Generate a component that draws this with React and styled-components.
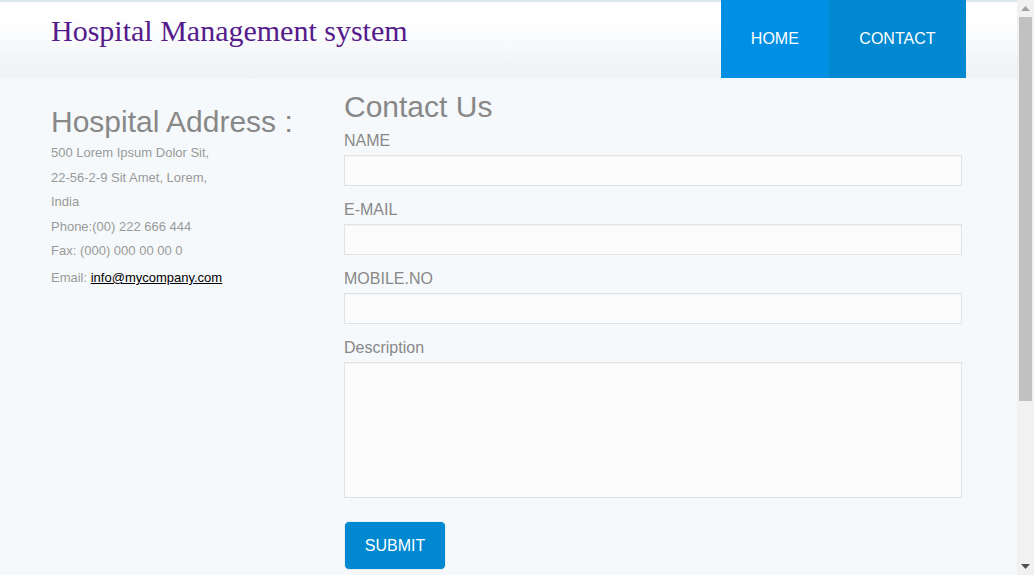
import React from "react";
import styled, { createGlobalStyle } from "styled-components";

const Global = createGlobalStyle`
  html, body { margin: 0; padding: 0; }
  body {
    background: #f6f9fb;
    font-family: "Liberation Sans", Arial, sans-serif;
  }
  * { box-sizing: border-box; }
`;

const Page = styled.div`
  margin-right: 17px;
`;

const Scrollbar = styled.div`
  position: fixed;
  top: 0;
  right: 0;
  width: 17px;
  height: 100vh;
  background: #f1f1f1;
  display: flex;
  flex-direction: column;
`;

const ScrollArrow = styled.div`
  height: 17px;
  display: flex;
  align-items: center;
  justify-content: center;
  flex: none;
`;

const Track = styled.div`
  flex: 1;
  padding: 0 2px;
`;

const Thumb = styled.div`
  height: 71%;
  background: #c1c1c1;
`;

const Header = styled.header`
  display: flex;
  align-items: stretch;
  height: 78px;
  padding: 0 51px;
  background: linear-gradient(to bottom, #dde7ee 0, #dde7ee 2px, #ffffff 2px, #ffffff 20%, #eef2f5 100%);
`;

const Brand = styled.a`
  font-family: "Liberation Serif", "Times New Roman", serif;
  font-size: 30px;
  color: #551a8b;
  text-decoration: none;
  line-height: 1;
  padding-top: 16px;
`;

const Nav = styled.nav`
  display: flex;
  margin-left: auto;
`;

const NavItem = styled.a`
  display: flex;
  align-items: center;
  justify-content: center;
  padding: 0 ${p => p.$pad}px;
  background: ${p => (p.$active ? "#0088d1" : "#008fe3")};
  color: #ffffff;
  font-size: 16px;
  text-decoration: none;
`;

const Main = styled.main`
  display: flex;
  padding: 0 55px 238px 51px;
`;

const AddressCol = styled.section`
  width: 293px;
  flex: none;
  padding-top: 26px;
`;

const Heading = styled.h2`
  margin: 0;
  font-size: 30px;
  font-weight: normal;
  line-height: 36px;
  color: #888888;
`;

const Line = styled.p`
  margin: 0;
  font-size: 13px;
  line-height: 24.5px;
  color: #999999;
  ${p => p.$first && "margin-top: 1px;"}
  ${p => p.$gap && "margin-top: 2.5px;"}
`;

const Mail = styled.a`
  color: #000000;
  text-decoration: underline;
`;

const FormCol = styled.form`
  flex: 1;
  padding-top: 11px;
`;

const FormTitle = styled(Heading)`
  margin-bottom: 6px;
`;

const Field = styled.div`
  display: flex;
  flex-direction: column;
  margin-bottom: 14px;
`;

const Label = styled.label`
  font-size: 16px;
  line-height: 20px;
  color: #888888;
  margin-bottom: 4px;
`;

const Input = styled.input`
  height: 31px;
  width: 100%;
  border: 1px solid #e2e2e2;
  background: #fbfbfb;
  box-shadow: inset 0 1px 1px rgba(0, 0, 0, 0.03);
  font-size: 14px;
  padding: 4px 6px;
  outline: none;
`;

const TextArea = styled.textarea`
  height: 136px;
  width: 100%;
  border: 1px solid #e2e2e2;
  background: #fbfbfb;
  box-shadow: inset 0 1px 1px rgba(0, 0, 0, 0.03);
  resize: none;
  outline: none;
`;

const Submit = styled.button`
  margin-top: 9px;
  width: 102px;
  height: 49px;
  background: #0088d1;
  color: #ffffff;
  border: 1px solid #e8eef2;
  border-radius: 5px;
  font-family: "Liberation Sans", Arial, sans-serif;
  font-size: 16px;
  cursor: pointer;
`;

export default function App() {
  return (
    <>
      <Global />
      <Page>
        <Header>
          <Brand href="#">Hospital Management system</Brand>
          <Nav>
            <NavItem href="#" $pad={30}>HOME</NavItem>
            <NavItem href="#" $pad={30.5} $active>CONTACT</NavItem>
          </Nav>
        </Header>
        <Main>
          <AddressCol>
            <Heading>Hospital Address :</Heading>
            <Line $first>500 Lorem Ipsum Dolor Sit,</Line>
            <Line>22-56-2-9 Sit Amet, Lorem,</Line>
            <Line>India</Line>
            <Line>Phone:(00) 222 666 444</Line>
            <Line>Fax: (000) 000 00 00 0</Line>
            <Line $gap>
              Email: <Mail href="#">info@mycompany.com</Mail>
            </Line>
          </AddressCol>
          <FormCol onSubmit={e => e.preventDefault()}>
            <FormTitle>Contact Us</FormTitle>
            <Field>
              <Label>NAME</Label>
              <Input type="text" />
            </Field>
            <Field>
              <Label>E-MAIL</Label>
              <Input type="text" />
            </Field>
            <Field>
              <Label>MOBILE.NO</Label>
              <Input type="text" />
            </Field>
            <Field>
              <Label>Description</Label>
              <TextArea />
            </Field>
            <Submit type="submit">SUBMIT</Submit>
          </FormCol>
        </Main>
      </Page>
      <Scrollbar aria-hidden="true">
        <ScrollArrow>
          <svg width="9" height="5" viewBox="0 0 9 5">
            <path d="M0 5 L4.5 0 L9 5 Z" fill="#a3a3a3" />
          </svg>
        </ScrollArrow>
        <Track>
          <Thumb />
        </Track>
        <ScrollArrow>
          <svg width="9" height="5" viewBox="0 0 9 5">
            <path d="M0 0 L4.5 5 L9 0 Z" fill="#505050" />
          </svg>
        </ScrollArrow>
      </Scrollbar>
    </>
  );
}
